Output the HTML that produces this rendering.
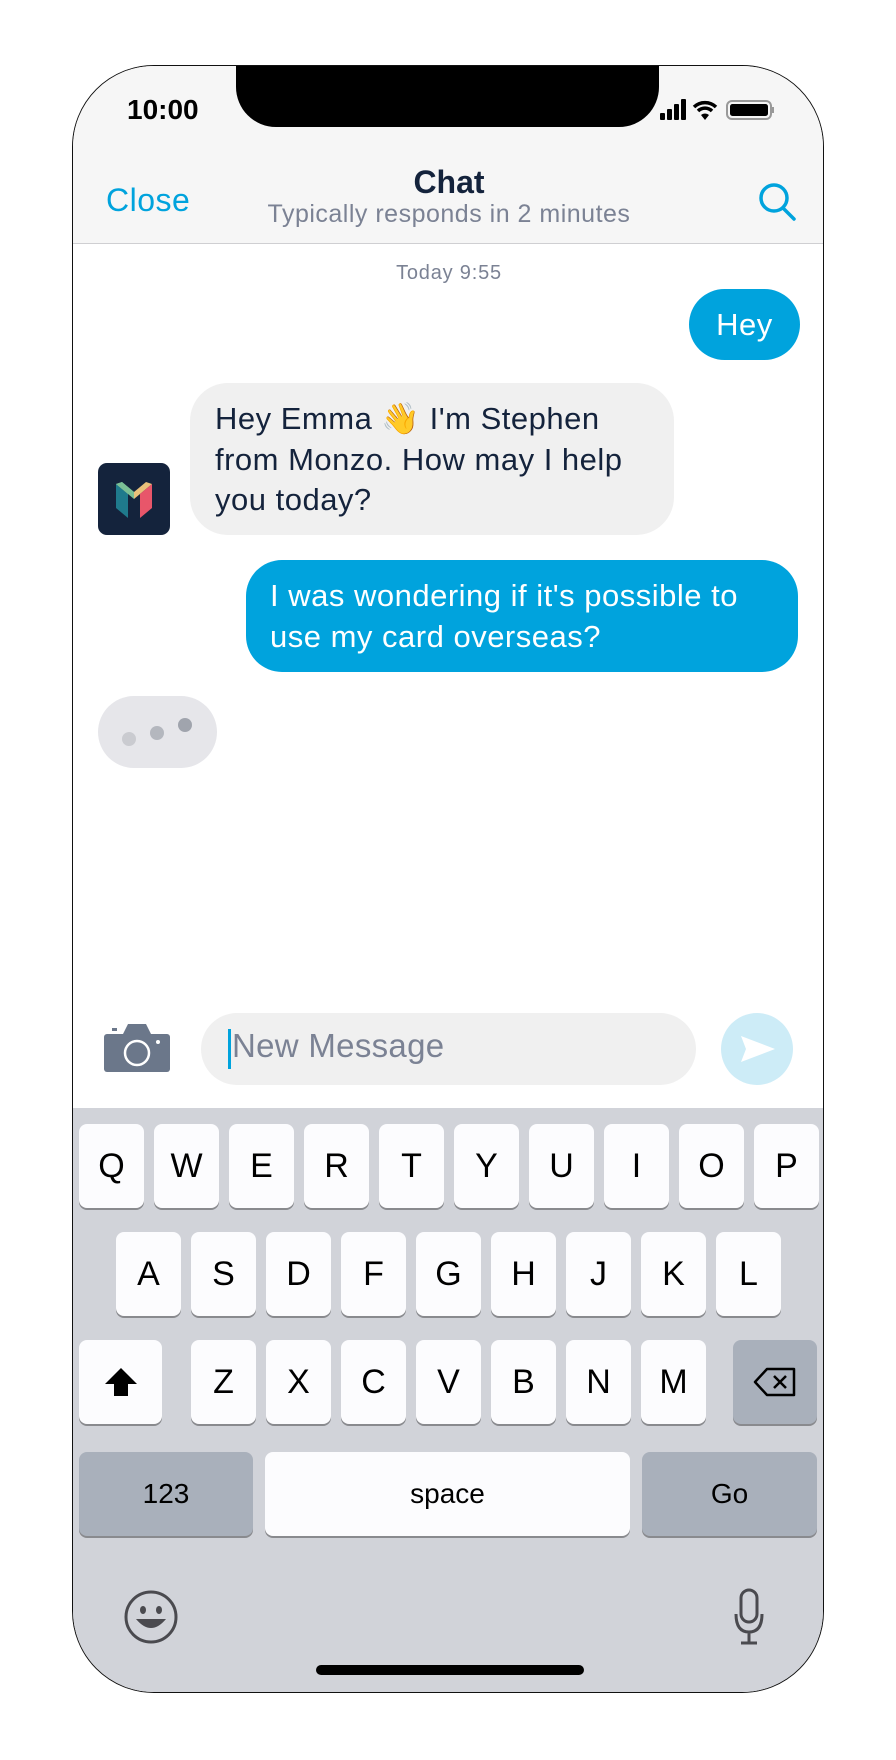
<!DOCTYPE html>
<html><head><meta charset="utf-8"><style>
*{margin:0;padding:0;box-sizing:border-box}
body{width:896px;height:1760px;background:#fff;position:relative;overflow:hidden;font-family:"Liberation Sans","DejaVu Sans",sans-serif}
.phone{position:absolute;left:72px;top:65px;width:752px;height:1628px;border-radius:82px;overflow:hidden;border:1.5px solid #111;background:#fff}
.a{position:absolute}
.hdr{left:0;top:0;width:100%;height:178px;background:#f6f6f6;border-bottom:1.5px solid #cfcfd2}
.notch{left:163px;top:-2px;width:423px;height:63px;background:#000;border-radius:0 0 40px 40px}
.key{position:absolute;width:65px;height:84px;background:#fcfcfe;border-radius:8px;box-shadow:0 2px 0 #898a8e;font-size:34px;color:#000;text-align:center;line-height:84px}
.dk{background:#a9b0bb}
.bub{position:absolute;font-size:31px;line-height:40.5px;letter-spacing:0.5px}
</style></head><body>
<div class="phone">
<div class="a hdr"></div>
<div class="a notch"></div>
<div class="a" style="left:54px;top:28px;font-size:28px;font-weight:bold;color:#000">10:00</div>
<svg class="a" style="left:586px;top:32px" width="120" height="24" viewBox="0 0 120 24">
<rect x="1" y="15" width="5" height="7" rx="1" fill="#000"/><rect x="8" y="11" width="5" height="11" rx="1"/><rect x="15" y="6" width="5" height="16" rx="1"/><rect x="22" y="1" width="5" height="21" rx="1"/>
<path d="M35 9 A16 16 0 0 1 57 9" stroke="#000" stroke-width="3.5" fill="none"/><path d="M39 13 A10 10 0 0 1 53 13" stroke="#000" stroke-width="3.5" fill="none"/><path d="M42 17 L46 22 L50 17 A6 6 0 0 0 42 17Z" fill="#000"/>
<rect x="68" y="3" width="44" height="18" rx="5" fill="none" stroke="#999" stroke-width="2"/><rect x="71" y="6" width="38" height="12" rx="2.5" fill="#000"/><rect x="113" y="9" width="2" height="6" fill="#999"/>
</svg>
<div class="a" style="left:0;width:752px;top:98px;text-align:center;font-size:32px;font-weight:bold;color:#14233c">Chat</div>
<div class="a" style="left:0;width:752px;top:134px;text-align:center;font-size:25px;letter-spacing:0.5px;color:#7b8294">Typically responds in 2 minutes</div>
<div class="a" style="left:33px;top:116px;font-size:32px;letter-spacing:0.5px;color:#00a3dd">Close</div>
<svg class="a" style="left:684px;top:115px" width="42" height="40" viewBox="0 0 42 40"><circle cx="17" cy="17" r="13" fill="none" stroke="#00a3dd" stroke-width="3.5"/><path d="M26 27 L37 38" stroke="#00a3dd" stroke-width="3.5" stroke-linecap="round"/></svg>
<div class="a" style="left:0;width:752px;top:196px;text-align:center;font-size:20px;letter-spacing:0.8px;color:#7b8294">Today 9:55</div>
<div class="bub" style="left:616px;top:223px;width:111px;height:71px;background:#00a3dd;border-radius:36px;color:#fff;text-align:center;line-height:71px">Hey</div>
<div class="bub" style="left:117px;top:317px;width:484px;height:152px;background:#f0f0f0;border-radius:38px;color:#14233c;padding:16px 0 0 25px">Hey Emma 👋 I'm Stephen<br>from Monzo. How may I help<br>you today?</div>
<div class="a" style="left:25px;top:397px;width:72px;height:72px;background:#14233c;border-radius:9px"></div>
<svg class="a" style="left:41px;top:416px" width="40" height="36" viewBox="0 0 40 36"><path d="M2 2 L14 12 L14 36 L2 26Z" fill="#1f7a8c"/><path d="M2 2 L8 0 L20 10 L14 12Z" fill="#7bbf95"/><path d="M2 2 L14 12 L20 17 L20 10 L8 0Z" fill="#7bbf95"/><path d="M20 10 L32 0 L38 2 L26 12 L20 17Z" fill="#e9c07a"/><path d="M38 2 L38 26 L26 36 L26 12Z" fill="#e8566a"/></svg>
<div class="bub" style="left:173px;top:494px;width:552px;height:112px;background:#00a3dd;border-radius:36px;color:#fff;padding:16px 0 0 24px">I was wondering if it's possible to<br>use my card overseas?</div>
<div class="a" style="left:25px;top:630px;width:119px;height:72px;background:#e6e6ea;border-radius:36px"></div>
<div class="a" style="left:49px;top:666px;width:14px;height:14px;border-radius:50%;background:#cacbd0"></div>
<div class="a" style="left:77px;top:660px;width:14px;height:14px;border-radius:50%;background:#b4b7be"></div>
<div class="a" style="left:105px;top:652px;width:14px;height:14px;border-radius:50%;background:#a0a4ad"></div>
<svg class="a" style="left:31px;top:958px" width="66" height="48" viewBox="0 0 66 48"><rect x="0" y="10" width="66" height="38" rx="3" fill="#6b778a"/><path d="M18 12 L24 0 L42 0 L48 12Z" fill="#6b778a"/><rect x="8" y="4" width="5" height="3" fill="#6b778a"/><circle cx="33" cy="29" r="12" fill="none" stroke="#fff" stroke-width="2.5"/><circle cx="54" cy="18" r="2" fill="#fff"/></svg>
<div class="a" style="left:128px;top:947px;width:495px;height:72px;background:#f0f0f0;border-radius:36px"></div>
<div class="a" style="left:155px;top:963px;width:3px;height:40px;background:#00a3dd"></div>
<div class="a" style="left:159px;top:961px;font-size:33px;letter-spacing:0.3px;color:#7b8294">New Message</div>
<div class="a" style="left:648px;top:947px;width:72px;height:72px;background:#cdecf7;border-radius:50%"></div>
<svg class="a" style="left:668px;top:970px" width="34" height="26" viewBox="0 0 34 26"><path d="M0 0 L34 13 L0 26 L5 13Z" fill="#fff"/></svg>
<div class="a" style="left:0;top:1042px;width:752px;height:600px;background:#d1d3d9"></div>
<div class="a" style="left:0;top:-4px;width:752px">
<div class="key" style="left:6px;top:1062px">Q</div><div class="key" style="left:81px;top:1062px">W</div><div class="key" style="left:156px;top:1062px">E</div><div class="key" style="left:231px;top:1062px">R</div><div class="key" style="left:306px;top:1062px">T</div><div class="key" style="left:381px;top:1062px">Y</div><div class="key" style="left:456px;top:1062px">U</div><div class="key" style="left:531px;top:1062px">I</div><div class="key" style="left:606px;top:1062px">O</div><div class="key" style="left:681px;top:1062px">P</div>
<div class="key" style="left:43px;top:1170px">A</div><div class="key" style="left:118px;top:1170px">S</div><div class="key" style="left:193px;top:1170px">D</div><div class="key" style="left:268px;top:1170px">F</div><div class="key" style="left:343px;top:1170px">G</div><div class="key" style="left:418px;top:1170px">H</div><div class="key" style="left:493px;top:1170px">J</div><div class="key" style="left:568px;top:1170px">K</div><div class="key" style="left:643px;top:1170px">L</div>
<div class="key" style="left:6px;top:1278px;width:83px"><svg width="36" height="32" viewBox="0 0 36 32" style="margin-top:26px"><path d="M18 2 L34 18 L25 18 L25 30 L11 30 L11 18 L2 18Z" fill="#000"/></svg></div>
<div class="key" style="left:118px;top:1278px">Z</div><div class="key" style="left:193px;top:1278px">X</div><div class="key" style="left:268px;top:1278px">C</div><div class="key" style="left:343px;top:1278px">V</div><div class="key" style="left:418px;top:1278px">B</div><div class="key" style="left:493px;top:1278px">N</div><div class="key" style="left:568px;top:1278px">M</div>
<div class="key dk" style="left:660px;top:1278px;width:84px"><svg width="44" height="30" viewBox="0 0 44 30" style="margin-top:27px"><path d="M14 2 L41 2 L41 28 L14 28 L2 15Z" fill="none" stroke="#000" stroke-width="2.5" stroke-linejoin="round"/><path d="M21 9 L33 21 M33 9 L21 21" stroke="#000" stroke-width="2.5"/></svg></div>
<div class="key dk" style="left:6px;top:1390px;width:174px;font-size:28px">123</div>
<div class="key" style="left:192px;top:1390px;width:365px;font-size:28px">space</div>
<div class="key dk" style="left:569px;top:1390px;width:175px;font-size:28px">Go</div>
</div>
<svg class="a" style="left:50px;top:1523px" width="56" height="56" viewBox="0 0 56 56"><circle cx="28" cy="28" r="25" fill="none" stroke="#4a4a4f" stroke-width="3"/><ellipse cx="20" cy="21" rx="3" ry="4" fill="#4a4a4f"/><ellipse cx="36" cy="21" rx="3" ry="4" fill="#4a4a4f"/><path d="M13 30 Q28 48 43 30 Z" fill="#4a4a4f"/></svg>
<svg class="a" style="left:660px;top:1522px" width="32" height="58" viewBox="0 0 32 58"><rect x="8" y="2" width="16" height="32" rx="8" fill="none" stroke="#4a4a4f" stroke-width="3"/><path d="M3 26 Q3 44 16 44 Q29 44 29 26 M16 44 L16 54 M8 55 L24 55" fill="none" stroke="#4a4a4f" stroke-width="3"/></svg>
<div class="a" style="left:243px;top:1599px;width:268px;height:10px;border-radius:5px;background:#000"></div>
</div>
</body></html>
